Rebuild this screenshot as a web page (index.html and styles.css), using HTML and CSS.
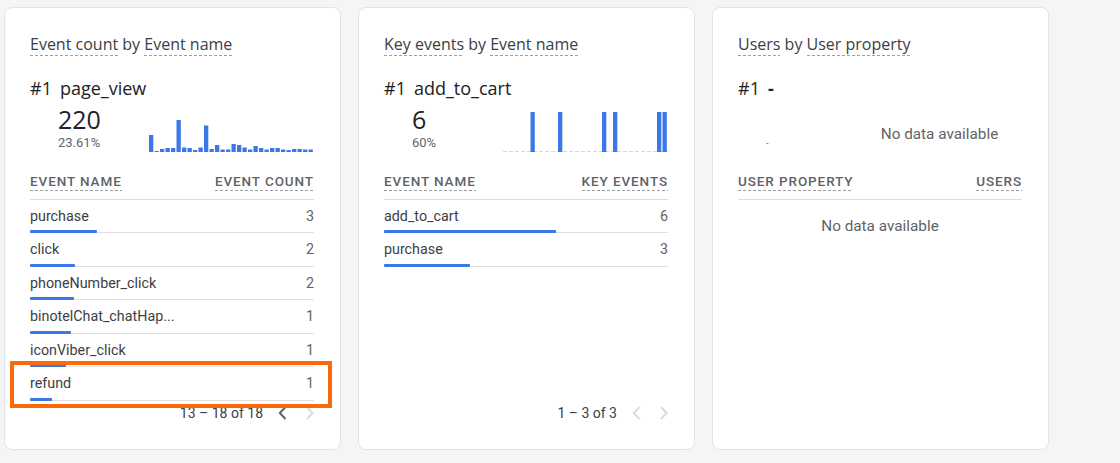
FILE: index.html
```html
<!DOCTYPE html>
<html>
<head>
<meta charset="utf-8">
<link rel="stylesheet" href="styles.css">
</head>
<body>
<div class="cards">
  <section class="card">
    <h2 class="title"><span class="dash">Event count</span> by <span class="dash">Event name</span></h2>
    <div class="top"><span class="rank">#1</span><span class="top-name">page_view</span></div>
    <div class="summary">
      <div class="stat">
        <div class="value">220</div>
        <div class="pct">23.61%</div>
      </div>
      <svg class="spark" viewBox="0 0 165 40" width="165" height="40">
        <g fill="#3b78e7">
          <rect x="0" y="23" width="4.3" height="17"/>
          <rect x="5.5" y="39" width="4.3" height="1"/>
          <rect x="11" y="37" width="4.3" height="3"/>
          <rect x="16.5" y="36" width="4.3" height="4"/>
          <rect x="22" y="36" width="4.3" height="4"/>
          <rect x="27.5" y="8" width="4.3" height="32"/>
          <rect x="33" y="35.5" width="4.3" height="4.5"/>
          <rect x="38.5" y="36" width="4.3" height="4"/>
          <rect x="44" y="38" width="4.3" height="2"/>
          <rect x="49.5" y="35.5" width="4.3" height="4.5"/>
          <rect x="55" y="13.5" width="4.3" height="26.5"/>
          <rect x="60.5" y="37" width="4.3" height="3"/>
          <rect x="66" y="33" width="4.3" height="7"/>
          <rect x="71.5" y="37.5" width="4.3" height="2.5"/>
          <rect x="77" y="37.5" width="4.3" height="2.5"/>
          <rect x="82.5" y="32" width="4.3" height="8"/>
          <rect x="88" y="33" width="4.3" height="7"/>
          <rect x="93.5" y="35.5" width="4.3" height="4.5"/>
          <rect x="99" y="37.5" width="4.3" height="2.5"/>
          <rect x="104.5" y="34" width="4.3" height="6"/>
          <rect x="110" y="36" width="4.3" height="4"/>
          <rect x="115.5" y="37.5" width="4.3" height="2.5"/>
          <rect x="121" y="36" width="4.3" height="4"/>
          <rect x="126.5" y="36" width="4.3" height="4"/>
          <rect x="132" y="37.5" width="4.3" height="2.5"/>
          <rect x="137.5" y="38" width="4.3" height="2"/>
          <rect x="143" y="37" width="4.3" height="3"/>
          <rect x="148.5" y="37" width="4.3" height="3"/>
          <rect x="154" y="37.5" width="4.3" height="2.5"/>
          <rect x="159.5" y="37.5" width="4.3" height="2.5"/>
        </g>
      </svg>
    </div>
    <div class="table">
      <div class="thead"><span class="dash">Event name</span><span class="dash">Event count</span></div>
      <div class="row"><div class="cells"><span>purchase</span><span class="num">3</span></div><div class="bar" style="width:67px"></div></div>
      <div class="row"><div class="cells"><span>click</span><span class="num">2</span></div><div class="bar" style="width:45px"></div></div>
      <div class="row"><div class="cells"><span>phoneNumber_click</span><span class="num">2</span></div><div class="bar" style="width:44px"></div></div>
      <div class="row"><div class="cells"><span>binotelChat_chatHap...</span><span class="num">1</span></div><div class="bar" style="width:41px"></div></div>
      <div class="row"><div class="cells"><span>iconViber_click</span><span class="num">1</span></div><div class="bar" style="width:36px"></div></div>
      <div class="row"><div class="cells"><span>refund</span><span class="num">1</span></div><div class="bar" style="width:22px"></div></div>
    </div>
    <div class="pager">
      <span>13 – 18 of 18</span>
      <svg class="chev prev" width="9" height="14" viewBox="0 0 9 14"><polyline points="7.5,1 1.8,7 7.5,13" fill="none" stroke="#5f6368" stroke-width="2"/></svg>
      <svg class="chev next" width="8" height="14" viewBox="0 0 8 14"><polyline points="1,1 6.6,7 1,13" fill="none" stroke="#dadce0" stroke-width="2"/></svg>
    </div>
    <div class="highlight"></div>
  </section>

  <section class="card">
    <h2 class="title"><span class="dash">Key events</span> by <span class="dash">Event name</span></h2>
    <div class="top"><span class="rank">#1</span><span class="top-name">add_to_cart</span></div>
    <div class="summary">
      <div class="stat">
        <div class="value">6</div>
        <div class="pct">60%</div>
      </div>
      <svg class="spark" viewBox="0 0 165 40" width="165" height="40">
        <line x1="0" y1="39.5" x2="165" y2="39.5" stroke="#d5d7da" stroke-width="1" stroke-dasharray="4 2"/>
        <g fill="#3b78e7">
          <rect x="27.5" y="0" width="4.3" height="40"/>
          <rect x="55" y="0" width="4.3" height="40"/>
          <rect x="99" y="0" width="4.3" height="40"/>
          <rect x="110" y="0" width="4.3" height="40"/>
          <rect x="154" y="0" width="4.3" height="40"/>
          <rect x="159.5" y="0" width="4.3" height="40"/>
        </g>
      </svg>
    </div>
    <div class="table">
      <div class="thead"><span class="dash">Event name</span><span class="dash">Key events</span></div>
      <div class="row"><div class="cells"><span>add_to_cart</span><span class="num">6</span></div><div class="bar" style="width:172px"></div></div>
      <div class="row"><div class="cells"><span>purchase</span><span class="num">3</span></div><div class="bar" style="width:86px"></div></div>
    </div>
    <div class="pager">
      <span>1 – 3 of 3</span>
      <svg class="chev prev" width="9" height="14" viewBox="0 0 9 14"><polyline points="7.5,1 1.8,7 7.5,13" fill="none" stroke="#dadce0" stroke-width="2"/></svg>
      <svg class="chev next" width="8" height="14" viewBox="0 0 8 14"><polyline points="1,1 6.6,7 1,13" fill="none" stroke="#dadce0" stroke-width="2"/></svg>
    </div>
  </section>

  <section class="card">
    <h2 class="title"><span class="dash">Users</span> by <span class="dash">User property</span></h2>
    <div class="top"><span class="rank">#1</span><span class="top-name bold">-</span></div>
    <div class="summary">
      <div class="stat">
        <div class="value">&nbsp;</div>
        <div class="pct small">-</div>
      </div>
      <div class="nodata spark-empty">No data available</div>
    </div>
    <div class="table">
      <div class="thead"><span class="dash">User property</span><span class="dash">Users</span></div>
      <div class="nodata table-empty">No data available</div>
    </div>
  </section>
</div>
</body>
</html>
```

FILE: styles.css
```css
* { box-sizing: border-box; }

body {
  margin: 0;
  background: #f4f5f7;
  font-family: Roboto, "Liberation Sans", sans-serif;
  width: 1120px;
  height: 463px;
  overflow: hidden;
}

.cards {
  display: flex;
  gap: 17px;
  padding: 7px 0 0 4px;
}

.card {
  position: relative;
  width: 337px;
  height: 443px;
  background: #fff;
  border: 1px solid #e3e4e6;
  border-radius: 8px;
  padding: 26px 26px 24px 25px;
  display: flex;
  flex-direction: column;
}

.title {
  margin: 0;
  font-family: "Open Sans", Roboto, sans-serif;
  font-weight: 400;
  font-size: 16px;
  line-height: 20px;
  color: #3c4043;
}

.dash {
  background-image: linear-gradient(to right, #9aa0a6 60%, transparent 60%);
  background-size: 5px 1px;
  background-repeat: repeat-x;
  background-position: left bottom;
  padding-bottom: 1px;
}

.top {
  margin-top: 22px;
  height: 24px;
  line-height: 24px;
  font-family: "Open Sans", Roboto, sans-serif;
  font-size: 18px;
  color: #202124;
  display: flex;
  gap: 8px;
}

.rank { font-weight: 500; }
.bold { font-weight: 700; }

.summary {
  margin-top: 4px;
  display: flex;
  height: 48px;
}

.stat {
  width: 119px;
  padding-left: 28px;
}

.value {
  font-family: "Open Sans", Roboto, sans-serif;
  font-size: 25px;
  line-height: 30px;
  color: #202124;
}

.pct {
  font-size: 13px;
  line-height: 18px;
  color: #5f6368;
}

.pct.small { font-size: 9px; }

.spark {
  display: block;
  margin-top: 8px;
}

.nodata {
  font-size: 15.3px;
  color: #5f6368;
}

.spark-empty {
  flex: 1;
  text-align: center;
  padding-top: 20px;
  line-height: 20px;
}

.table {
  flex: 1;
  margin-top: 20.5px;
}

.thead {
  display: flex;
  justify-content: space-between;
  font-size: 13.5px;
  font-weight: 500;
  letter-spacing: 0.9px;
  text-transform: uppercase;
  line-height: 16px;
  color: #5f6368;
  padding-bottom: 8px;
  border-bottom: 1px solid #dadce0;
}

.thead .dash { padding-bottom: 2px; }

.row {
  padding-top: 6px;
  border-bottom: 1px solid #e0e0e0;
}

.cells {
  display: flex;
  justify-content: space-between;
  font-size: 14.3px;
  line-height: 20px;
  color: #3c4043;
}

.num { color: #5f6368; }

.bar {
  height: 3px;
  margin-top: 4.5px;
  margin-bottom: -1px;
  background: #3b78e7;
  border-radius: 1px;
}

.table-empty {
  text-align: center;
  padding-top: 16.5px;
  line-height: 20px;
}

.pager {
  display: flex;
  justify-content: flex-end;
  align-items: center;
  height: 24px;
  font-size: 14px;
  color: #3c4043;
}

.chev { display: block; }
.chev.prev { margin-left: 15px; }
.chev.next { margin-left: 19px; }

.highlight {
  position: absolute;
  left: 5px;
  top: 353px;
  width: 322px;
  height: 47px;
  border: 4px solid #f96a0b;
  pointer-events: none;
}
```
